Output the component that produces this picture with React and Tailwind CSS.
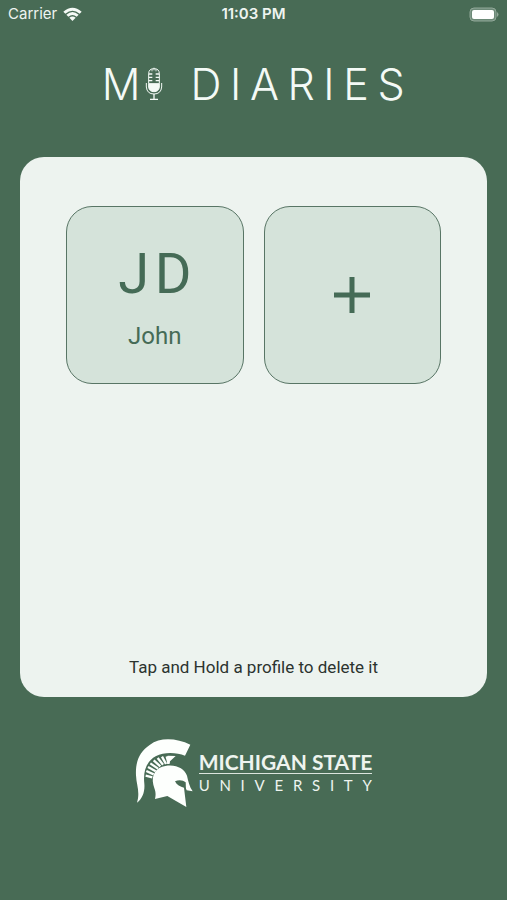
function StatusBar() {
  return (
    <div className="grid h-7 grid-cols-3 items-center px-2 font-['Inter',sans-serif] text-[15px] text-[#eef4f0]">
      <div className="flex items-center gap-1.5">
        <span>Carrier</span>
        <svg width="19" height="15" viewBox="0 0 57 45" fill="#f5faf6">
          <path d="M1 14Q28.500 -10 56 14L50 20Q28.500 2 7 20Z" />
          <path d="M10 23Q28.500 7 47 23L41 29Q28.500 19 16 29Z" />
          <path d="M19 32Q28.500 25 38 32L28.500 42Z" />
        </svg>
      </div>
      <span className="text-center font-semibold whitespace-nowrap">11:03 PM</span>
      <div className="flex justify-end">
        <svg width="30" height="15" viewBox="0 0 30 15">
          <rect x="1" y="1" width="26" height="13" rx="4" fill="#6d8a78" stroke="#91a899" />
          <rect x="3" y="3" width="22" height="9" rx="2" fill="#fff" />
          <path d="M28 5Q31 7.500 28 10Z" fill="#91a899" />
        </svg>
      </div>
    </div>
  )
}

function Microphone() {
  return (
    <svg width="18" height="34" viewBox="0 0 54 102" fill="none" stroke="#f4faf6" strokeWidth="3">
      <path d="M11 50V20Q11 5 27 5Q43 5 43 20V50" />
      <path d="M27 2V10M21 6V13M33 6V13" strokeWidth="2.500" />
      <path d="M11 21H22M32 21H43M11 31H22M32 31H43M11 41H22M32 41H43" strokeWidth="4" />
      <path d="M11 50H43V61Q41 74 27 74Q13 74 11 61Z" fill="#f4faf6" />
      <path d="M4 48V60Q6 81 27 81Q48 81 50 60V48" />
      <path d="M27 81V96M15 97H39" strokeWidth="4" />
    </svg>
  )
}

function SpartanHelmet() {
  return (
    <svg width="60" height="70" viewBox="14 18 180 210" fill="#fdfffd" className="shrink-0">
      <path d="M180 41C139 22 91 17 58 42C25 64 15 96 17 133C18 162 30 182 20 215C37 202 44 181 42 158C38 122 47 92 76 76C103 62 139 65 164 74Z" />
      <path d="M74 204C79 184 73 176 69 161C62 131 78 109 105 105C137 99 162 113 170 134C174 151 177 166 187 181L169 178C165 172 167 160 166 154C158 147 145 146 134 151C139 162 150 167 161 170L168 228L111 195Z" />
      <path
        d="M46 134L66 139M48 120L70 130M53 108L76 121M60 97L83 113M70 88L90 106M82 81L98 101M95 77L107 99M109 76L115 98"
        fill="none"
        stroke="#fdfffd"
        strokeWidth="7"
      />
      <path d="M112 74L136 75L119 91L117 99L109 98Z" />
    </svg>
  )
}

function ProfileTile({ label, children }) {
  return (
    <button
      type="button"
      aria-label={label}
      className="flex aspect-square flex-col items-center justify-center rounded-[26px] border border-[#587565] bg-[#d5e3da] text-[#456b56]"
    >
      {children}
    </button>
  )
}

export default function App() {
  return (
    <div className="flex min-h-screen flex-col bg-[#486b55] font-['Roboto',sans-serif]">
      <StatusBar />

      <h1 className="flex h-28 items-center justify-center pl-2 font-['Inter',sans-serif] text-[43px] font-light text-[#f4faf6]">
        <span className="pr-1">M</span>
        <Microphone />
        <span className="pl-7 tracking-[0.2em]">DIARIES</span>
      </h1>

      <main className="mx-5 mt-[17px] flex h-[540px] flex-col justify-between rounded-3xl bg-[#edf3ef] px-[46px] pt-[49px] pb-[18px]">
        <div className="grid grid-cols-2 gap-5">
          <ProfileTile label="John">
            <span className="pt-0.5 pl-1.5 text-[56px] leading-[68px] tracking-widest">JD</span>
            <span className="pt-3 text-[24px] leading-8">John</span>
          </ProfileTile>
          <ProfileTile label="Add profile">
            <svg width="36" height="36" viewBox="0 0 36 36" stroke="currentColor" strokeWidth="5">
              <path d="M18 0V36M0 18H36" />
            </svg>
          </ProfileTile>
        </div>
        <p className="text-center text-[17px] leading-6 text-[#2c332f]">Tap and Hold a profile to delete it</p>
      </main>

      <footer className="mt-10 flex items-center justify-center gap-1 font-['Lato',sans-serif] text-[#eef4ef]">
        <SpartanHelmet />
        <div>
          <p className="border-b border-[#dbe5de] text-[21px] leading-[22px] font-bold whitespace-nowrap">MICHIGAN STATE</p>
          <p className="-mr-3 pt-0.5 text-[15px] leading-[18px] tracking-[0.65em]">UNIVERSITY</p>
        </div>
      </footer>
    </div>
  )
}
